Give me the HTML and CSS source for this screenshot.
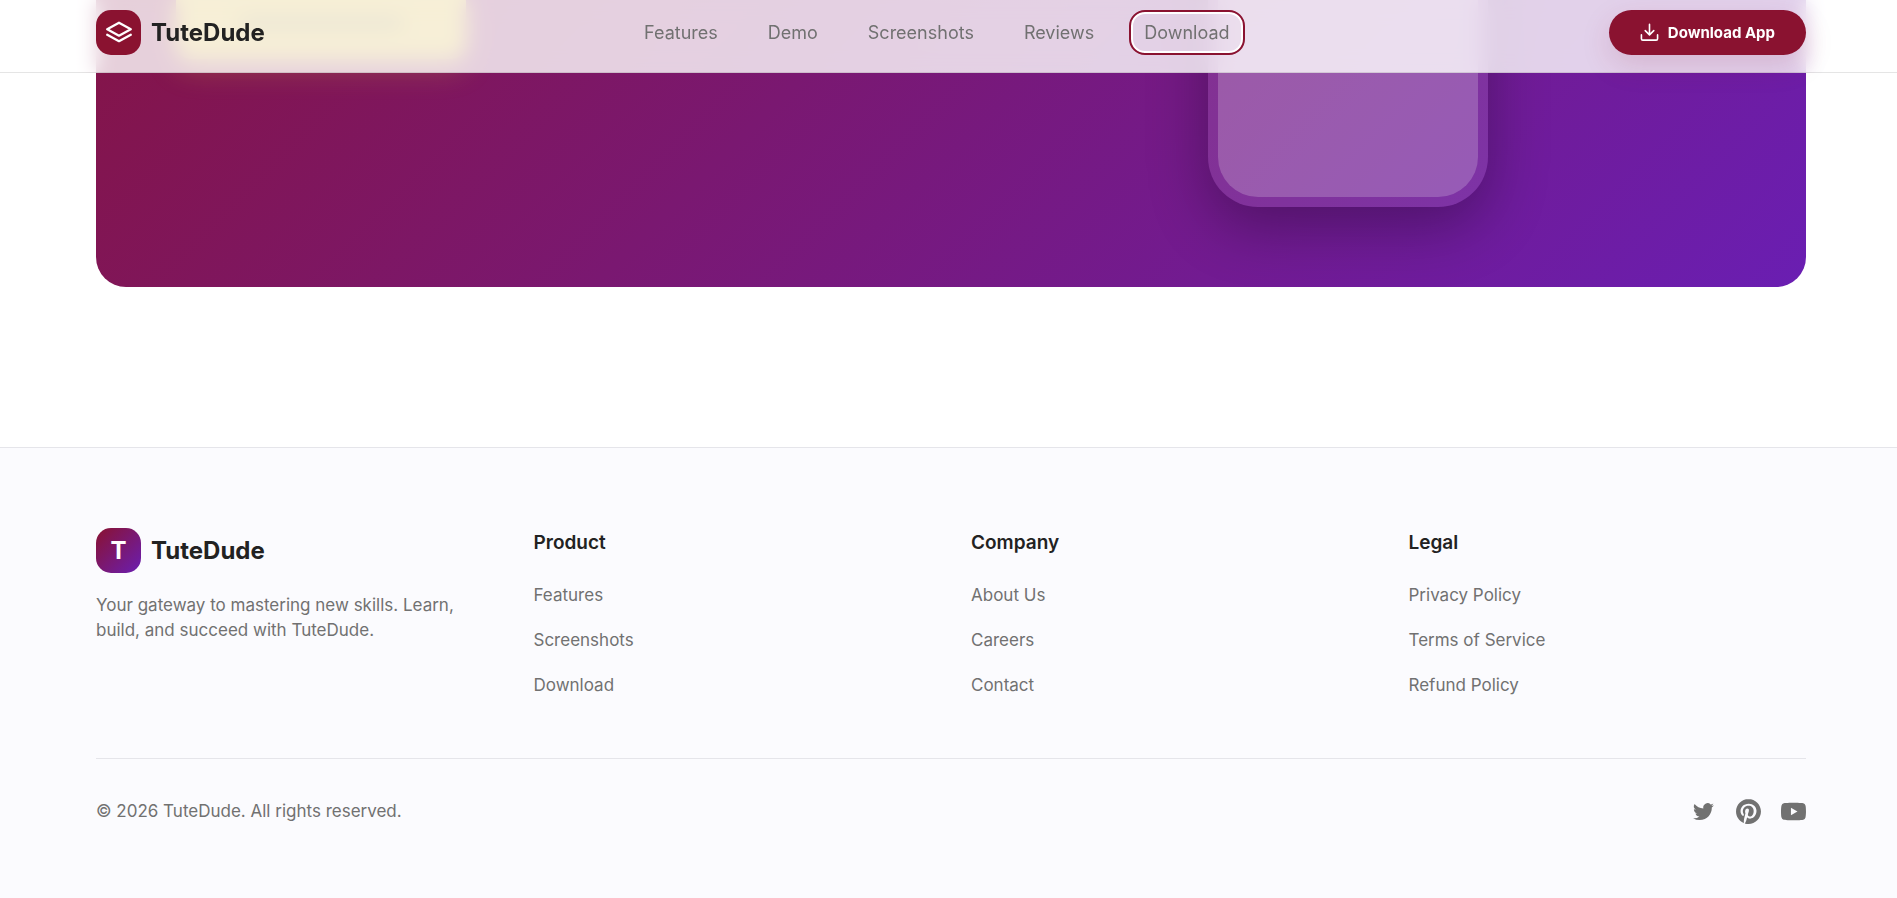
FILE: index.html
```html
<!DOCTYPE html>
<html lang="en">
<head>
<meta charset="utf-8">
<meta name="viewport" content="width=device-width, initial-scale=1">
<title>TuteDude</title>
<link rel="stylesheet" href="styles.css">
</head>
<body>
<header class="site-header">
  <a class="brand" href="#">
    <span class="brand-mark">
      <svg class="brand-icon" viewBox="0 0 30 30" fill="none" stroke="currentColor" stroke-width="2.300" stroke-linecap="round" stroke-linejoin="round" aria-hidden="true"><path d="M15 4.700 26.800 11.200 15 17.700 3.200 11.200Z"/><path d="M3.200 16.700 15 23.200 26.800 16.700"/></svg>
    </span>
    <span class="brand-name">TuteDude</span>
  </a>
  <nav class="main-nav" aria-label="Main">
    <a class="nav-link" href="#features">Features</a>
    <a class="nav-link" href="#demo">Demo</a>
    <a class="nav-link" href="#screenshots">Screenshots</a>
    <a class="nav-link" href="#reviews">Reviews</a>
    <a class="nav-link nav-link-active" href="#download">Download</a>
  </nav>
  <button class="download-button" type="button">
    <svg class="download-icon" viewBox="0 0 20 20" fill="none" stroke="currentColor" stroke-width="1.700" stroke-linecap="round" stroke-linejoin="round" aria-hidden="true"><path d="M10 1.500v10.500M5.500 8 10 12.500 14.500 8M1.500 12.500v4a1.500 1.500 0 0 0 1.500 1.500h14a1.500 1.500 0 0 0 1.500-1.500v-4"/></svg>
    Download App
  </button>
</header>

<main>
  <section class="promo" id="download">
    <div class="promo-card">
      <div class="promo-action"><span class="promo-action-line"></span></div>
      <div class="phone"><div class="phone-screen"></div></div>
    </div>
  </section>
</main>

<footer class="site-footer">
  <div class="footer-grid">
    <div class="footer-about">
      <a class="brand" href="#">
        <span class="brand-mark brand-mark-gradient">T</span>
        <span class="brand-name">TuteDude</span>
      </a>
      <p class="footer-text">Your gateway to mastering new skills. Learn, build, and succeed with TuteDude.</p>
    </div>
    <div class="footer-column">
      <h4 class="footer-title">Product</h4>
      <ul class="footer-list">
        <li><a class="footer-link" href="#features">Features</a></li>
        <li><a class="footer-link" href="#screenshots">Screenshots</a></li>
        <li><a class="footer-link" href="#download">Download</a></li>
      </ul>
    </div>
    <div class="footer-column">
      <h4 class="footer-title">Company</h4>
      <ul class="footer-list">
        <li><a class="footer-link" href="#about">About Us</a></li>
        <li><a class="footer-link" href="#careers">Careers</a></li>
        <li><a class="footer-link" href="#contact">Contact</a></li>
      </ul>
    </div>
    <div class="footer-column">
      <h4 class="footer-title">Legal</h4>
      <ul class="footer-list">
        <li><a class="footer-link" href="#privacy">Privacy Policy</a></li>
        <li><a class="footer-link" href="#terms">Terms of Service</a></li>
        <li><a class="footer-link" href="#refund">Refund Policy</a></li>
      </ul>
    </div>
  </div>
  <div class="footer-bottom">
    <p class="copyright">© 2026 TuteDude. All rights reserved.</p>
    <div class="social">
      <a class="social-link" href="#twitter" aria-label="Twitter"><svg viewBox="0 0 24 24" fill="currentColor"><path d="M8.290 20.251c7.547 0 11.675-6.253 11.675-11.675 0-.178 0-.355-.012-.53A8.348 8.348 0 0022 5.920a8.190 8.190 0 01-2.357.646 4.118 4.118 0 001.804-2.270 8.224 8.224 0 01-2.605.996 4.107 4.107 0 00-6.993 3.743 11.650 11.650 0 01-8.457-4.287 4.106 4.106 0 001.270 5.477A4.072 4.072 0 012.800 9.713v.052a4.105 4.105 0 003.292 4.022 4.095 4.095 0 01-1.853.07 4.108 4.108 0 003.834 2.850A8.233 8.233 0 012 18.407a11.616 11.616 0 006.290 1.840"/></svg></a>
      <a class="social-link" href="#pinterest" aria-label="Pinterest"><svg viewBox="0 0 24 24" fill="currentColor"><path d="M12.017 0C5.396 0 .029 5.367.029 11.987c0 5.079 3.158 9.417 7.618 11.162-.105-.949-.199-2.403.041-3.439.219-.937 1.406-5.957 1.406-5.957s-.359-.72-.359-1.781c0-1.663.967-2.911 2.168-2.911 1.024 0 1.518.769 1.518 1.688 0 1.029-.653 2.567-.992 3.992-.285 1.193.6 2.165 1.775 2.165 2.128 0 3.768-2.245 3.768-5.487 0-2.861-2.063-4.869-5.008-4.869-3.410 0-5.409 2.562-5.409 5.199 0 1.033.394 2.143.889 2.741.099.12.112.225.085.345-.09.375-.293 1.199-.334 1.363-.053.225-.172.271-.401.165-1.495-.69-2.433-2.878-2.433-4.646 0-3.776 2.748-7.252 7.920-7.252 4.158 0 7.392 2.967 7.392 6.923 0 4.135-2.607 7.462-6.233 7.462-1.214 0-2.354-.629-2.758-1.379l-.749 2.848c-.269 1.045-1.004 2.352-1.498 3.146 1.123.345 2.306.535 3.550.535 6.607 0 11.985-5.365 11.985-11.987C23.970 5.390 18.592.026 11.985.026z"/></svg></a>
      <a class="social-link" href="#youtube" aria-label="YouTube"><svg viewBox="0 0 24 24" fill="currentColor"><path d="M23.498 6.186a3.016 3.016 0 0 0-2.122-2.136C19.505 3.545 12 3.545 12 3.545s-7.505 0-9.377.505A3.017 3.017 0 0 0 .502 6.186C0 8.070 0 12 0 12s0 3.930.502 5.814a3.016 3.016 0 0 0 2.122 2.136c1.871.505 9.376.505 9.376.505s7.505 0 9.377-.505a3.015 3.015 0 0 0 2.122-2.136C24 15.930 24 12 24 12s0-3.930-.502-5.814zM9.545 15.568V8.432L15.818 12z"/></svg></a>
    </div>
  </div>
</footer>
</body>
</html>
```
FILE: styles.css
```css
:root {
  --crimson: #8a1230;
  --violet: #6a1eb2;
  --gold: #d4af37;
  --ink: #222222;
  --muted: #717171;
  --line: #e5e5ea;
  --page-left: 96px;
  --page-right: 91px;
}

* {
  box-sizing: border-box;
}

body {
  margin: 0;
  min-height: 100vh;
  display: flex;
  flex-direction: column;
  background: #ffffff;
  color: var(--ink);
  font-family: Inter, "Open Sans", sans-serif;
  font-size: 17px;
  line-height: 25px;
}

a {
  color: inherit;
  text-decoration: none;
}

.site-header {
  position: fixed;
  top: 0;
  left: 0;
  right: 0;
  z-index: 10;
  display: flex;
  align-items: center;
  justify-content: space-between;
  padding: 10px var(--page-right) 17px var(--page-left);
  background: rgba(255, 255, 255, 0.8);
  border-bottom: 1px solid rgba(0, 0, 0, 0.1);
  backdrop-filter: blur(10px);
}

.brand {
  display: flex;
  align-items: center;
  gap: 10px;
}

.brand-mark {
  display: flex;
  align-items: center;
  justify-content: center;
  width: 45px;
  height: 45px;
  border-radius: 15px;
  background: var(--crimson);
  color: #ffffff;
  font-size: 24px;
  font-weight: 700;
}

.brand-mark-gradient {
  background: linear-gradient(135deg, var(--crimson), var(--violet));
}

.brand-icon {
  width: 30px;
  height: 30px;
}

.brand-name {
  font-size: 24px;
  font-weight: 700;
  line-height: 45px;
}

.main-nav {
  display: flex;
  align-items: center;
  gap: 28px;
}

.nav-link {
  padding: 6px 11px;
  border-radius: 12px;
  color: var(--muted);
  font-size: 18px;
}

.nav-link-active {
  outline: 2px solid var(--crimson);
  outline-offset: 2px;
  box-shadow: 0 0 0 2px #ffffff;
}

.download-button {
  display: flex;
  align-items: center;
  gap: 9px;
  height: 45px;
  padding: 0 31px;
  border: 0;
  border-radius: 23px;
  background: var(--crimson);
  box-shadow: 0 10px 30px rgba(138, 18, 48, 0.15);
  color: #ffffff;
  font-family: inherit;
  font-size: 15px;
  font-weight: 700;
  white-space: nowrap;
}

.download-icon {
  width: 19px;
  height: 19px;
}

.promo {
  display: flex;
  align-items: flex-end;
  height: 447px;
  padding: 0 var(--page-right) 160px var(--page-left);
  overflow: hidden;
}

.promo-card {
  flex: 1;
  display: flex;
  align-items: flex-end;
  justify-content: space-between;
  padding: 80px 318px 80px 80px;
  border-radius: 30px;
  background: linear-gradient(135deg, var(--crimson), var(--violet));
}

.promo-action {
  display: flex;
  align-items: center;
  justify-content: center;
  width: 290px;
  height: 72px;
  margin-bottom: 148px;
  border-radius: 15px;
  background: var(--gold);
  box-shadow: 0 10px 30px rgba(212, 175, 55, 0.3);
}

.promo-action-line {
  width: 160px;
  height: 4px;
  background: var(--ink);
}

.phone {
  width: 280px;
  height: 560px;
  padding: 10px;
  border-radius: 50px;
  background: rgba(255, 255, 255, 0.1);
  box-shadow: 0 20px 60px rgba(0, 0, 0, 0.3);
}

.phone-screen {
  height: 100%;
  border-radius: 40px;
  background: rgba(255, 255, 255, 0.2);
}

.site-footer {
  flex: 1;
  padding: 80px var(--page-right) 60px var(--page-left);
  border-top: 1px solid var(--line);
  background: #fbfbfe;
  color: var(--muted);
}

.footer-grid {
  display: grid;
  grid-template-columns: repeat(4, 1fr);
  gap: 40px;
  padding-bottom: 60px;
}

.footer-about .brand {
  color: var(--ink);
}

.footer-text {
  margin: 20px 0 0;
}

.footer-title {
  margin: 0;
  color: var(--ink);
  font-size: 19px;
  font-weight: 600;
  line-height: 30px;
}

.footer-list {
  display: flex;
  flex-direction: column;
  gap: 20px;
  margin: 25px 0 0;
  padding: 0;
  list-style: none;
}

.footer-bottom {
  display: flex;
  align-items: center;
  justify-content: space-between;
  padding-top: 40px;
  border-top: 1px solid var(--line);
}

.copyright {
  margin: 0;
}

.social {
  display: flex;
  gap: 20px;
}

.social-link {
  display: flex;
  width: 25px;
  height: 25px;
}
```
